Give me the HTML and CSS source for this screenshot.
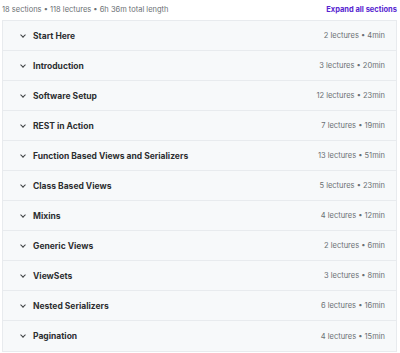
FILE: index.html
```html
<!DOCTYPE html>
<html>
<head lang="en">
    <meta charset="UTF-8">
    <title>Course content</title>
    <link rel="stylesheet" href="styles.css">
</head>
<body>
<div id="content">
    <div class="summary">
        <span class="stats">18 sections • 118 lectures • 6h 36m total length</span>
        <span class="expand">Expand all sections</span>
    </div>
    <ul class="sections">
        <li><span class="title">Start Here</span><span class="meta">2 lectures • 4min</span></li>
        <li><span class="title">Introduction</span><span class="meta">3 lectures • 20min</span></li>
        <li><span class="title">Software Setup</span><span class="meta">12 lectures • 23min</span></li>
        <li><span class="title">REST in Action</span><span class="meta">7 lectures • 19min</span></li>
        <li><span class="title">Function Based Views and Serializers</span><span class="meta">13 lectures • 51min</span></li>
        <li><span class="title">Class Based Views</span><span class="meta">5 lectures • 23min</span></li>
        <li><span class="title">Mixins</span><span class="meta">4 lectures • 12min</span></li>
        <li><span class="title">Generic Views</span><span class="meta">2 lectures • 6min</span></li>
        <li><span class="title">ViewSets</span><span class="meta">3 lectures • 8min</span></li>
        <li><span class="title">Nested Serializers</span><span class="meta">6 lectures • 16min</span></li>
        <li><span class="title">Pagination</span><span class="meta">4 lectures • 15min</span></li>
    </ul>
</div>
</body>
</html>
```

FILE: styles.css
```css
* {
    margin: 0;
    padding: 0;
    box-sizing: border-box;
}

body {
    font-family: Inter, "Liberation Sans", sans-serif;
    color: #2d2f31;
    background: #fff;
}

ul {
    list-style: none;
}

#content {
    padding: 0 3px 0 2px;
}

.summary {
    height: 20px;
    display: flex;
    justify-content: space-between;
    align-items: center;
    padding-bottom: 2px;
}

.stats {
    font-size: 7.5px;
    color: #6a6f73;
}

.expand {
    font-size: 7.5px;
    font-weight: 700;
    color: #5624d0;
}

.sections {
    border: 1px solid #e8ebee;
}

.sections li {
    height: 30px;
    display: flex;
    align-items: center;
    justify-content: space-between;
    padding: 0 11px 0 16px;
    background: #f7f9fa;
    border-bottom: 1px solid #e8ebee;
}

.sections li:last-child {
    border-bottom: 0;
}

.title {
    display: flex;
    align-items: center;
    font-size: 8.5px;
    font-weight: 700;
}

.title::before {
    content: "";
    width: 3px;
    height: 3px;
    border-right: 1px solid #3e4143;
    border-bottom: 1px solid #3e4143;
    transform: rotate(45deg);
    margin: -2px 8px 0 2px;
}

.meta {
    font-size: 7.5px;
    color: #6a6f73;
}
```
